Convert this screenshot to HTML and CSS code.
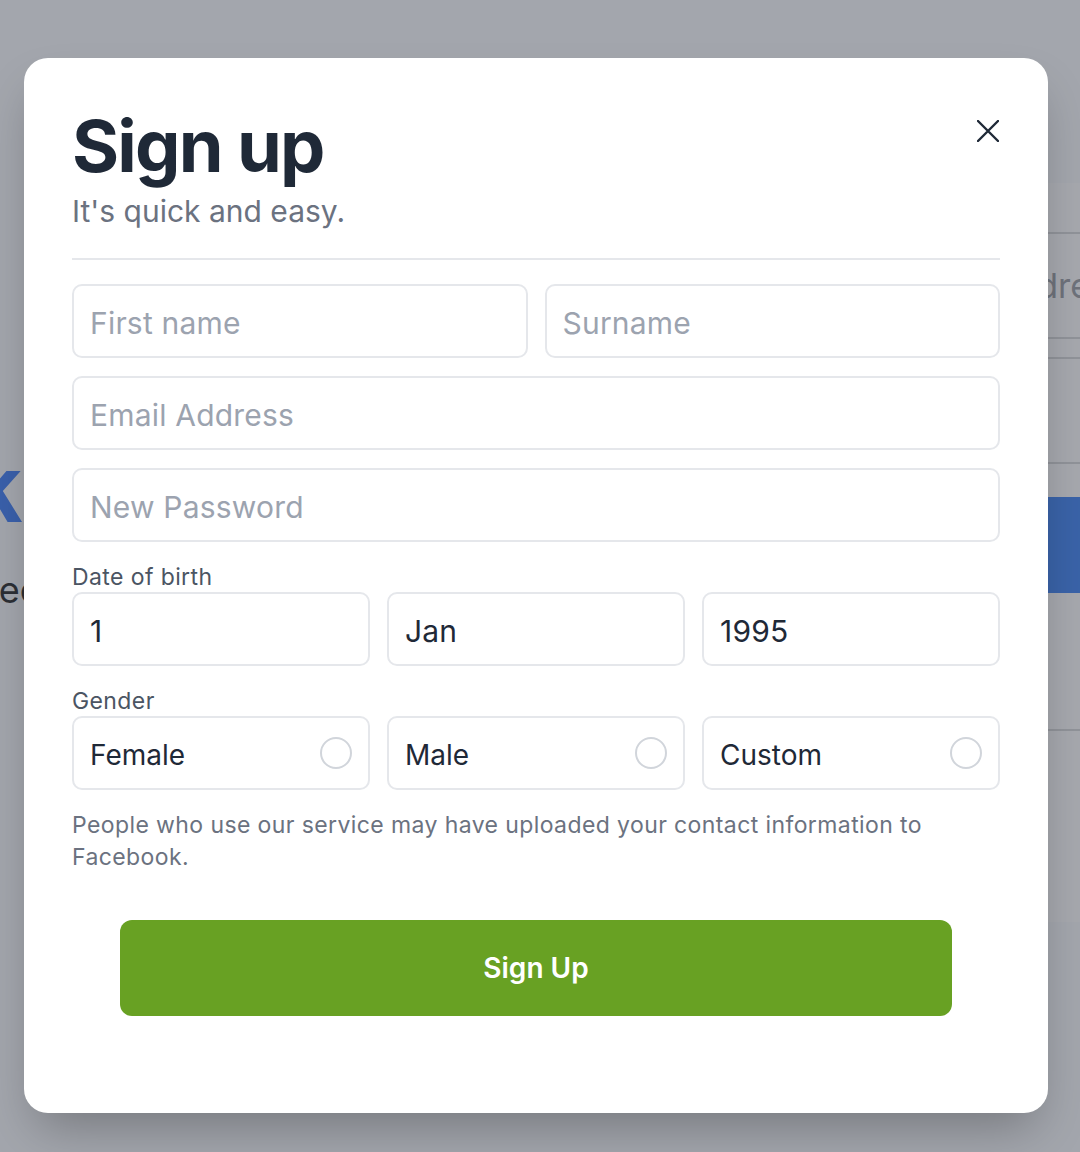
FILE: index.html
```html
<!DOCTYPE html>
<html lang="en">
<head>
<meta charset="utf-8">
<title>Sign up</title>
<link rel="stylesheet" href="styles.css">
</head>
<body>
<div class="page">
  <div class="brand">
    <div class="brand-logo">facebook</div>
    <div class="brand-tagline">Facebook helps you connect</div>
  </div>
  <div class="login-card">
    <div class="login-input"><span>Email address or phone number</span></div>
    <div class="login-input"></div>
    <div class="login-btn"></div>
    <div class="login-forgot"></div>
    <div class="login-divider"></div>
  </div>
</div>

<div class="overlay">
  <div class="modal">
    <div class="modal-header">
      <div>
        <h1 class="title">Sign up</h1>
        <p class="subtitle">It's quick and easy.</p>
      </div>
      <button class="close" type="button" aria-label="Close">
        <svg width="22" height="22" viewBox="0 0 22 22" fill="none" stroke="#1f2937" stroke-width="2.4" stroke-linecap="round">
          <path d="M1 1 L21 21 M21 1 L1 21"/>
        </svg>
      </button>
    </div>
    <div class="divider"></div>
    <form class="form">
      <div class="row two">
        <input class="field" type="text" placeholder="First name">
        <input class="field" type="text" placeholder="Surname">
      </div>
      <input class="field" type="text" placeholder="Email Address">
      <input class="field" type="password" placeholder="New Password">
      <div class="group">
        <div class="label">Date of birth</div>
        <div class="row three">
          <div class="field value">1</div>
          <div class="field value">Jan</div>
          <div class="field value">1995</div>
        </div>
      </div>
      <div class="group">
        <div class="label">Gender</div>
        <div class="row three">
          <label class="field value radio-box">Female<span class="radio"></span></label>
          <label class="field value radio-box">Male<span class="radio"></span></label>
          <label class="field value radio-box">Custom<span class="radio"></span></label>
        </div>
      </div>
      <p class="note">People who use our service may have uploaded your contact information to Facebook.</p>
      <button class="submit" type="button">Sign Up</button>
    </form>
  </div>
</div>
</body>
</html>
```

FILE: styles.css
```css
* { box-sizing: border-box; }

html, body {
  margin: 0;
  padding: 0;
}

body {
  width: 1080px;
  height: 1152px;
  overflow: hidden;
  position: relative;
  background: #a3a6ad;
  font-family: Inter, "Noto Sans", "Liberation Sans", sans-serif;
}

.page {
  display: flex;
  justify-content: space-between;
  align-items: flex-start;
  height: 100%;
  padding-top: 183px;
}

.brand {
  width: 700px;
  margin-left: -680px;
  padding-top: 258px;
  text-align: right;
  white-space: nowrap;
}

.brand-logo {
  font-family: "Liberation Sans", Arial, sans-serif;
  font-weight: 700;
  font-size: 96px;
  line-height: 96px;
  letter-spacing: -2px;
  color: #3a60ab;
}

.brand-tagline {
  margin-top: 31px;
  margin-right: -32px;
  font-size: 36px;
  line-height: 44px;
  color: #2c2f35;
}

.login-card {
  width: 700px;
  height: 739px;
  margin-right: -520px;
  background: #a6a8ae;
  padding: 49px 0 0 0;
  display: flex;
  flex-direction: column;
  gap: 18px;
}

.login-input {
  height: 107px;
  border-top: 2px solid #909399;
  border-bottom: 2px solid #909399;
  display: flex;
  align-items: center;
  padding-left: 2px;
  font-size: 34px;
  color: #6e727b;
  white-space: nowrap;
}

.login-btn {
  margin-top: 15px;
  height: 96px;
  background: #3a63a8;
}

.login-forgot {
  height: 100px;
}

.login-divider {
  height: 2px;
  background: #909399;
}

/* overlay + modal */
.overlay {
  position: absolute;
  inset: 0;
  display: flex;
  justify-content: flex-start;
  align-items: flex-start;
  padding: 58px 0 0 24px;
}

.modal {
  width: 1024px;
  background: #ffffff;
  border-radius: 24px;
  padding: 52px 48px 49px;
  box-shadow: 0 25px 50px -12px rgba(0, 0, 0, 0.28);
}

.modal-header {
  display: flex;
  justify-content: space-between;
  align-items: flex-start;
}

.title {
  margin: 0;
  font-size: 72px;
  line-height: 72px;
  font-weight: 700;
  letter-spacing: -1.8px;
  color: #1f2937;
}

.subtitle {
  margin: 11px 0 0;
  font-size: 30px;
  line-height: 36px;
  color: #6b7280;
}

.close {
  margin-top: 10px;
  margin-right: 1px;
  width: 22px;
  height: 22px;
  padding: 0;
  border: none;
  background: none;
  display: flex;
}

.divider {
  margin-top: 29px;
  height: 2px;
  background: #e5e7eb;
}

.form {
  margin: 24px 0 0;
  display: flex;
  flex-direction: column;
  gap: 18px;
}

.row {
  display: grid;
  gap: 17px;
}

.row.two { grid-template-columns: 1fr 1fr; }
.row.three { grid-template-columns: 1fr 1fr 1fr; }

.field {
  width: 100%;
  height: 74px;
  border: 2px solid #e5e7eb;
  border-radius: 10px;
  padding: 3px 16px 0;
  font-family: inherit;
  font-size: 30px;
  letter-spacing: 0.2px;
  color: #1f2937;
  background: #ffffff;
  outline: none;
}

.field::placeholder {
  color: #9ca3af;
}

.value {
  display: flex;
  align-items: center;
}

.radio-box .radio {
  margin-top: -3px;
}

.group {
  display: flex;
  flex-direction: column;
  gap: 1px;
  margin-top: 1px;
}

.label {
  padding-top: 2px;
  font-size: 23px;
  line-height: 28px;
  color: #4b5563;
  letter-spacing: 0.4px;
}

.radio-box {
  justify-content: space-between;
  padding-right: 16px;
  font-size: 28px;
  letter-spacing: 0;
}

.radio {
  width: 32px;
  height: 32px;
  border: 2px solid #d1d5db;
  border-radius: 50%;
}

.note {
  margin: 1px 0 0;
  font-size: 23px;
  line-height: 32px;
  color: #6b7280;
  letter-spacing: 0.4px;
}

.submit {
  margin: 29px 48px 48px;
  height: 96px;
  border: none;
  border-radius: 12px;
  background: #68a123;
  color: #ffffff;
  font-family: inherit;
  font-size: 28px;
  font-weight: 600;
}
```
